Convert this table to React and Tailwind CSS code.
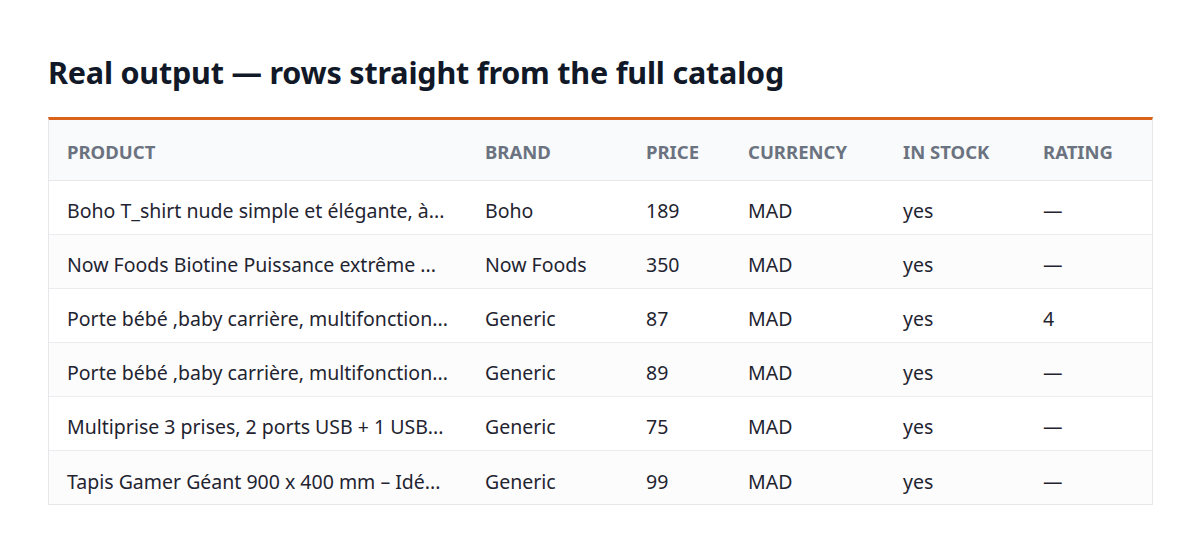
import React from "react";

const rows = [
  ["Boho T_shirt nude simple et élégante, à...", "Boho", "189", "MAD", "yes", "—"],
  ["Now Foods Biotine Puissance extrême ...", "Now Foods", "350", "MAD", "yes", "—"],
  ["Porte bébé ,baby carrière, multifonction...", "Generic", "87", "MAD", "yes", "4"],
  ["Porte bébé ,baby carrière, multifonction...", "Generic", "89", "MAD", "yes", "—"],
  ["Multiprise 3 prises, 2 ports USB + 1 USB...", "Generic", "75", "MAD", "yes", "—"],
  ["Tapis Gamer Géant 900 x 400 mm – Idé...", "Generic", "99", "MAD", "yes", "—"],
];

const heads = ["Product", "Brand", "Price", "Currency", "In stock", "Rating"];
const widths = ["w-[418px]", "w-[161px]", "w-[102px]", "w-[155px]", "w-[140px]", "w-[127px]"];

export default function App() {
  return (
    <div
      className="w-[1200px] h-[552px] bg-white px-12 pt-[49px]"
      style={{ fontFamily: '"Noto Sans", "Open Sans", sans-serif' }}
    >
      <h1 className="text-[30.5px] leading-[46px] font-bold text-[#111827] tracking-[-0.2px]">
        Real output — rows straight from the full catalog
      </h1>
      <div className="mt-[22px] w-[1105px] border border-[#e5e7eb] border-t-[3px] border-t-[#d9631b]">
        <table className="w-full table-fixed border-collapse">
          <colgroup>
            {widths.map((w, i) => (
              <col key={i} className={w} />
            ))}
          </colgroup>
          <thead>
            <tr className="h-[60px] bg-[#f9fafb] border-b border-[#e8e8ea]">
              {heads.map((h) => (
                <th
                  key={h}
                  className="text-left pl-[18px] pt-[5px] text-[18.5px] font-bold uppercase text-[#6b7280]"
                >
                  {h}
                </th>
              ))}
            </tr>
          </thead>
          <tbody>
            {rows.map((r, i) => (
              <tr
                key={i}
                className={
                  "h-[54px] text-[19.5px] text-[#1f2430] " +
                  (i < rows.length - 1 ? "border-b border-[#ececee] " : "") +
                  (i % 2 === 1 ? "bg-[#fcfcfd]" : "bg-white")
                }
              >
                {r.map((c, j) => (
                  <td key={j} className="pl-[18px] pt-[8px] whitespace-nowrap overflow-hidden">
                    {c}
                  </td>
                ))}
              </tr>
            ))}
          </tbody>
        </table>
      </div>
    </div>
  );
}
